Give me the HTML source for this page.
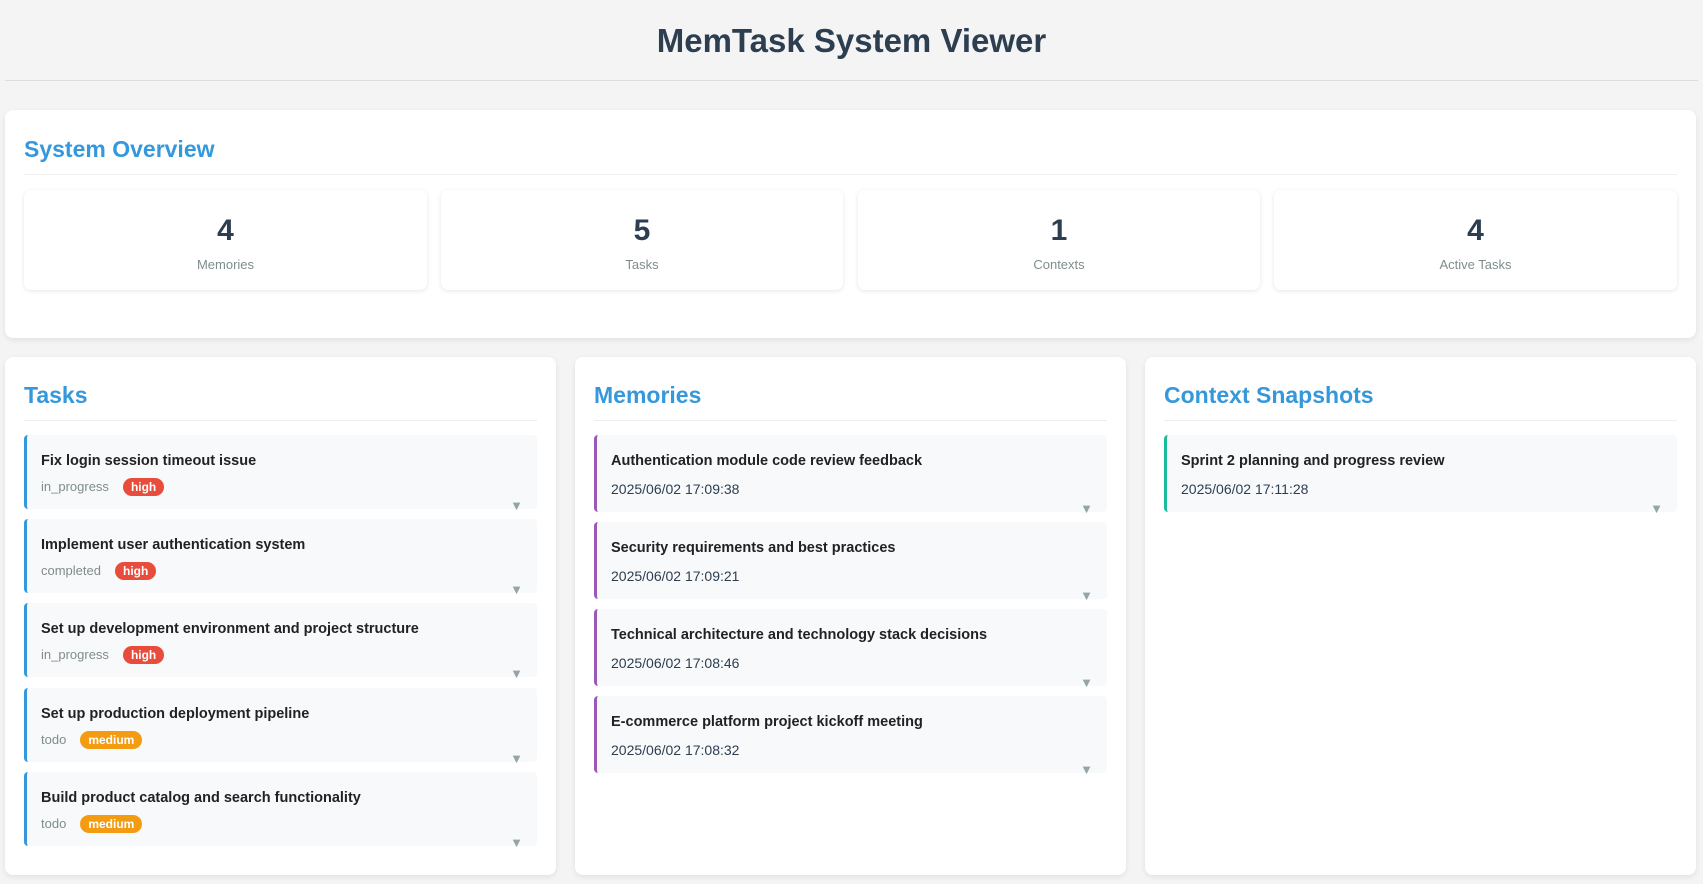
<!DOCTYPE html>
<html><head><meta charset="utf-8"><style>
*{box-sizing:border-box;margin:0;padding:0}
body{width:1703px;height:884px;background:#f4f4f4;font-family:"Liberation Sans",sans-serif;color:#2c3e50;position:relative;overflow:hidden}
h1{position:absolute;top:22px;left:0;width:1703px;text-align:center;font-size:33px;font-weight:bold;color:#2c3e50}
.hl{position:absolute;top:80px;left:5px;width:1693px;height:1px;background:#ddd}
.card{position:absolute;background:#fff;border-radius:8px;box-shadow:0 2px 6px rgba(0,0,0,.08)}
.ct{position:absolute;left:19px;font-size:23px;font-weight:bold;color:#3498db}
.dv{position:absolute;left:19px;height:1px;background:#eee}
.stat{position:absolute;top:80px;width:403px;height:100px;background:#fff;border-radius:7px;box-shadow:0 1px 5px rgba(0,0,0,.1);text-align:center}
.stat b{display:block;font-size:30px;margin-top:24px;color:#2c3e50}
.stat span{display:block;font-size:13px;color:#7f8c8d;margin-top:9px}
.it{position:absolute;left:19px;width:513px;background:#f8f9fa;border-radius:4px;border-left:3px solid #3498db}
.it .t{position:absolute;left:14px;font-size:14.5px;font-weight:bold;color:#222}
.it .s{position:absolute;left:14px;font-size:13px;color:#7f8c8d}
.bd{display:inline-block;margin-left:14px;padding:2px 8px;border-radius:10px;color:#fff;font-size:12px;font-weight:bold}
.hi{background:#e74c3c}.md{background:#f39c12}
.ar{position:absolute;right:14px;bottom:-4px;font-size:13px;color:#95a5a6}
.d{position:absolute;left:14px;font-size:14px;color:#2c3e50}
</style></head><body>
<h1>MemTask System Viewer</h1>
<div class="hl"></div>
<div class="card" style="left:5px;top:110px;width:1691px;height:228px">
<div class="ct" style="top:26px">System Overview</div>
<div class="dv" style="top:64px;width:1653px"></div>
<div class="stat" style="left:19px"><b>4</b><span>Memories</span></div>
<div class="stat" style="left:436px;width:402px"><b>5</b><span>Tasks</span></div>
<div class="stat" style="left:853px;width:402px"><b>1</b><span>Contexts</span></div>
<div class="stat" style="left:1269px"><b>4</b><span>Active Tasks</span></div>
</div>

<div class="card" style="left:5px;top:357px;width:551px;height:518px">
<div class="ct" style="top:25px">Tasks</div>
<div class="dv" style="top:63px;width:513px"></div>
<div class="it" style="top:78px;height:74px"><div class="t" style="top:18px">Fix login session timeout issue</div><div class="s" style="top:43px">in_progress<span class="bd hi">high</span></div><div class="ar">▼</div></div>
<div class="it" style="top:162px;height:74px"><div class="t" style="top:18px">Implement user authentication system</div><div class="s" style="top:43px">completed<span class="bd hi">high</span></div><div class="ar">▼</div></div>
<div class="it" style="top:246px;height:74px"><div class="t" style="top:18px">Set up development environment and project structure</div><div class="s" style="top:43px">in_progress<span class="bd hi">high</span></div><div class="ar">▼</div></div>
<div class="it" style="top:331px;height:74px"><div class="t" style="top:18px">Set up production deployment pipeline</div><div class="s" style="top:43px">todo<span class="bd md">medium</span></div><div class="ar">▼</div></div>
<div class="it" style="top:415px;height:74px"><div class="t" style="top:18px">Build product catalog and search functionality</div><div class="s" style="top:43px">todo<span class="bd md">medium</span></div><div class="ar">▼</div></div>
</div>

<div class="card" style="left:575px;top:357px;width:551px;height:518px">
<div class="ct" style="top:25px">Memories</div>
<div class="dv" style="top:63px;width:513px"></div>
<div class="it" style="top:78px;height:77px;border-left-color:#9b59b6"><div class="t" style="top:18px">Authentication module code review feedback</div><div class="d" style="top:46px">2025/06/02 17:09:38</div><div class="ar">▼</div></div>
<div class="it" style="top:165px;height:77px;border-left-color:#9b59b6"><div class="t" style="top:18px">Security requirements and best practices</div><div class="d" style="top:46px">2025/06/02 17:09:21</div><div class="ar">▼</div></div>
<div class="it" style="top:252px;height:77px;border-left-color:#9b59b6"><div class="t" style="top:18px">Technical architecture and technology stack decisions</div><div class="d" style="top:46px">2025/06/02 17:08:46</div><div class="ar">▼</div></div>
<div class="it" style="top:339px;height:77px;border-left-color:#9b59b6"><div class="t" style="top:18px">E-commerce platform project kickoff meeting</div><div class="d" style="top:46px">2025/06/02 17:08:32</div><div class="ar">▼</div></div>
</div>

<div class="card" style="left:1145px;top:357px;width:551px;height:518px">
<div class="ct" style="top:25px">Context Snapshots</div>
<div class="dv" style="top:63px;width:513px"></div>
<div class="it" style="top:78px;height:77px;border-left-color:#1abc9c"><div class="t" style="top:18px">Sprint 2 planning and progress review</div><div class="d" style="top:46px">2025/06/02 17:11:28</div><div class="ar">▼</div></div>
</div>
</body></html>
